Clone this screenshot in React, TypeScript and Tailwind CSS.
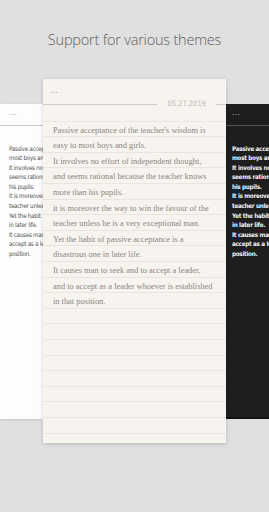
const lines = [
  "Passive acceptance of the teacher's wisdom is",
  "easy to most boys and girls.",
  "It involves no effort of independent thought,",
  "and seems rational because the teacher knows",
  "more than his pupils.",
  "it is moreover the way to win the favour of the",
  "teacher unless he is a very exceptional man.",
  "Yet the habit of passive acceptance is a",
  "disastrous one in later life.",
  "It causes man to seek and to accept a leader,",
  "and to accept as a leader whoever is established",
  "in that position.",
];

const leftLines = [
  "Passive accep",
  "most boys and",
  "It involves no",
  "seems rational",
  "his pupils.",
  "it is moreover",
  "teacher unles",
  "Yet the habit",
  "in later life.",
  "It causes man",
  "accept as a le",
  "position.",
];

const rightLines = [
  "Passive accep",
  "most boys and",
  "It involves no",
  "seems rationa",
  "his pupils.",
  "It is moreover",
  "teacher unles",
  "Yet the habit",
  "in later life.",
  "It causes man",
  "accept as a le",
  "position.",
];

const rows = Array.from({ length: 20 }, (_, i) => lines[i] ?? "");

function SideCard({ dark }: { dark?: boolean }) {
  const text = dark ? rightLines : leftLines;
  return (
    <div
      className={`w-[43px] h-[315px] shrink-0 overflow-hidden flex flex-col ${
        dark ? "bg-[#1e1e1e] pl-[6px] border-b-2 border-[#111]" : "bg-[#fdfdfd] pl-[9px] shadow-[0_1px_3px_rgba(0,0,0,0.12)]"
      }`}
    >
      <div
        className={`h-[21px] pt-[5px] text-[7px] leading-[7px] tracking-[1px] ${dark ? "text-[#bbb]" : "text-[#999]"}`}
      >
        ...
      </div>
      <div className={`h-px -ml-[10px] w-[60px] ${dark ? "bg-[#555]" : "bg-[#ccc]"}`} />
      <div
        className={`pt-[18px] whitespace-nowrap text-[6.3px] leading-[9.6px] tracking-[-0.3px] font-['DejaVu_Sans_Condensed','DejaVu_Sans',sans-serif] ${
          dark ? "text-[#f2f2f2] font-bold" : "text-[#555]"
        }`}
      >
        {text.map((l, i) => (
          <div key={i}>{l}</div>
        ))}
      </div>
    </div>
  );
}

export default function App() {
  return (
    <div className="w-[269px] h-[512px] bg-[#e0e0e0] overflow-hidden flex flex-col">
      <div className="h-[79px] flex items-center justify-center text-[14.5px] text-[#5c5c5c] font-light tracking-[-0.2px] font-['Open_Sans',sans-serif]">
        Support for various themes
      </div>
      <div className="flex items-center">
        <SideCard />
        <div className="relative z-10 w-[183px] h-[364px] shrink-0 bg-[#f7f4ef] shadow-[0_1px_4px_rgba(0,0,0,0.18)] flex flex-col">
          <div className="h-[20px] pl-[7px] pt-[8px] text-[7px] leading-[7px] tracking-[1px] text-[#888]">
            ...
          </div>
          <div className="h-[10px] flex items-center">
            <div className="flex-1 h-px bg-[#cfcbc5]" />
            <span className="px-[10px] text-[7.5px] leading-[10px] text-[#bdb9b3] font-['DejaVu_Sans_Condensed','DejaVu_Sans',sans-serif]">
              05.27.2019
            </span>
            <div className="w-[10px] h-px bg-[#cfcbc5]" />
          </div>
          <div className="h-[12.7px] border-b border-[#e9e5df]" />
          {rows.map((t, i) => (
            <div
              key={i}
              className="h-[15.6px] border-b border-[#e9e5df] pl-[10px] text-[8.4px] leading-[17px] whitespace-nowrap text-[#8a857f] font-['Liberation_Serif',serif]"
            >
              {t}
            </div>
          ))}
        </div>
        <SideCard dark />
      </div>
    </div>
  );
}
